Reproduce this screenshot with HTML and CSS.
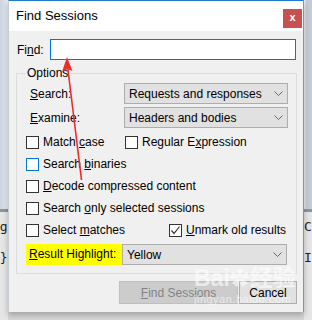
FILE: index.html
```html
<!DOCTYPE html>
<html lang="en">
<head>
    <meta charset="UTF-8">
    <title>Find Sessions</title>
    <link rel="stylesheet" href="styles.css">
</head>
<body>

<div class="screen">
    <!-- window behind, left edge -->
    <div class="side side-left">
        <div class="side-top"></div>
        <div class="side-band"></div>
        <div class="side-text">ag</div>
        <div class="side-text side-text-low">-}</div>
    </div>

    <div class="dialog">
        <div class="titlebar">
            <span class="title">Find Sessions</span>
            <span class="close-btn">x</span>
        </div>

        <div class="dlg-body">
            <!-- Find row -->
            <div class="find-row">
                <span class="find-label">Fi<u>n</u>d:</span>
                <div class="textbox"></div>
            </div>

            <fieldset class="options">
                <legend>Options</legend>

                <div class="field-row">
                    <span class="field-label"><u>S</u>earch:</span>
                    <div class="combo">
                        <span>Requests and responses</span>
                        <svg class="chevron" width="9" height="5" viewBox="0 0 9 5"><path d="M0.5 0.5 L4.5 4.5 L8.5 0.5" fill="none" stroke="#666" stroke-width="1"/></svg>
                    </div>
                </div>
                <div class="field-row">
                    <span class="field-label"><u>E</u>xamine:</span>
                    <div class="combo">
                        <span>Headers and bodies</span>
                        <svg class="chevron" width="9" height="5" viewBox="0 0 9 5"><path d="M0.5 0.5 L4.5 4.5 L8.5 0.5" fill="none" stroke="#666" stroke-width="1"/></svg>
                    </div>
                </div>

                <div class="check-row">
                    <label class="check-item col-short"><span class="check"></span><span class="check-text">Match <u>c</u>ase</span></label>
                    <label class="check-item"><span class="check"></span><span class="check-text">Regular E<u>x</u>pression</span></label>
                </div>
                <div class="check-row">
                    <label class="check-item"><span class="check check-focus"></span><span class="check-text">Search <u>b</u>inaries</span></label>
                </div>
                <div class="check-row">
                    <label class="check-item"><span class="check"></span><span class="check-text"><u>D</u>ecode compressed content</span></label>
                </div>
                <div class="check-row">
                    <label class="check-item"><span class="check"></span><span class="check-text">Search <u>o</u>nly selected sessions</span></label>
                </div>
                <div class="check-row">
                    <label class="check-item col-long"><span class="check"></span><span class="check-text">Select <u>m</u>atches</span></label>
                    <label class="check-item"><span class="check">
                        <svg width="11" height="11" viewBox="0 0 11 11"><path d="M1.5 5.5 L4 8.5 L9.5 1.5" fill="none" stroke="#333" stroke-width="1.2"/></svg>
                    </span><span class="check-text"><u>U</u>nmark old results</span></label>
                </div>

                <div class="highlight-row">
                    <span class="highlight-label"><u>R</u>esult Highlight:</span>
                    <div class="combo">
                        <span>Yellow</span>
                        <svg class="chevron" width="9" height="5" viewBox="0 0 9 5"><path d="M0.5 0.5 L4.5 4.5 L8.5 0.5" fill="none" stroke="#666" stroke-width="1"/></svg>
                    </div>
                </div>
            </fieldset>

            <div class="buttons">
                <div class="btn btn-disabled"><span><u>F</u>ind Sessions</span></div>
                <div class="btn"><span>Cancel</span></div>
            </div>
        </div>
    </div>

    <!-- window behind, right edge -->
    <div class="side side-right">
        <div class="side-top"></div>
        <div class="side-band"></div>
        <div class="side-text">Co</div>
        <div class="side-text side-text-low">I</div>
    </div>

    <!-- annotation arrow drawn over the dialog -->
    <svg class="arrow" width="312" height="320" viewBox="0 0 312 320">
        <path d="M67.5 66 L81.5 180" stroke="#ee2b2b" stroke-width="1.6" fill="none"/>
        <path d="M67 57 L62 72 L67.5 69 L72.5 71 Z" fill="#ee2b2b"/>
    </svg>

    <div class="watermark">
        <div class="wm-big">Bai<span class="wm-paw">&#10047;</span>经验</div>
        <div class="wm-small">jingyan.baidu.com</div>
    </div>
</div>

</body>
</html>
```

FILE: styles.css
```css
body {
    margin: 0;
    font-family: "Liberation Sans", "Noto Sans CJK SC", sans-serif;
    font-size: 12px;
    color: #000;
}

.screen {
    position: relative;
    width: 312px;
    height: 320px;
    display: flex;
    background: #d6d6d6;
    overflow: hidden;
}

/* edges of the window behind */
.side {
    width: 8px;
    height: 320px;
    overflow: hidden;
    background: #e6e6e6;
    display: flex;
    flex-direction: column;
    font-family: "DejaVu Sans Mono", monospace;
    font-size: 13px;
}

.side-left .side-top {
    height: 209px;
    background: linear-gradient(to right, #c9d2de, #e9edf2);
}

.side-right .side-top {
    height: 209px;
    background: linear-gradient(to right, #eeeeee 0, #eeeeee 1px, #c3ccd7 2px, #c3ccd7);
}

.side-band {
    height: 3px;
    background: #8e949b;
}

.side-text {
    margin-top: 6px;
    height: 18px;
    line-height: 18px;
    white-space: nowrap;
    color: #222;
}

.side-left .side-text {
    margin-left: -8px;
}

.side-text-low {
    margin-top: 13px;
}

/* dialog */
.dialog {
    width: 296px;
    height: 312px;
    box-sizing: border-box;
    border: 1px solid #c4cbd3;
    border-top: 1px solid #1f7ad3;
    border-right: 1px solid #5c9ddc;
    border-bottom: none;
    background: #f0f0f0;
    display: flex;
    flex-direction: column;
    box-shadow: 0 3px 6px rgba(0, 0, 0, 0.25);
    z-index: 1;
}

.titlebar {
    height: 30px;
    background: #fff;
    display: flex;
    align-items: center;
    justify-content: space-between;
    padding-left: 7px;
}

.title {
    font-size: 13px;
    margin-top: -1px;
}

.close-btn {
    width: 19px;
    height: 19px;
    margin-right: 1px;
    margin-top: 4px;
    background: #c75050;
    color: #fff;
    font-weight: bold;
    font-size: 11px;
    line-height: 17px;
    text-align: center;
}

.dlg-body {
    padding: 8px 6px 0 8px;
}

.find-row {
    display: flex;
    align-items: center;
    padding-right: 1px;
}

.find-label {
    width: 33px;
}

.textbox {
    flex: 1;
    height: 21px;
    box-sizing: border-box;
    border: 1px solid #0078d7;
    background: #fff;
}

.options {
    margin: 5px 0 0 -1px;
    padding: 2px 8px 8px 9px;
    border: 1px solid #dcdcdc;
    min-width: 0;
}

.options legend {
    padding: 0 1px;
    margin-left: 0;
    line-height: 16px;
}

.field-row {
    display: flex;
    align-items: center;
    height: 21px;
    margin-bottom: 3px;
}

.field-label {
    width: 94px;
    padding-left: 4px;
}

.combo {
    flex: 1;
    height: 21px;
    box-sizing: border-box;
    border: 1px solid #adadad;
    background: #e1e1e1;
    display: flex;
    align-items: center;
    justify-content: space-between;
    padding: 0 4px 0 4px;
}

.chevron {
    display: block;
}

.check-row {
    display: flex;
    align-items: center;
    height: 22px;
}

.field-row + .check-row {
    margin-top: 2px;
}

.check-item {
    display: flex;
    align-items: center;
    white-space: nowrap;
}

.col-short {
    width: 99px;
}

.col-long {
    width: 143px;
}

.check {
    width: 13px;
    height: 13px;
    box-sizing: border-box;
    border: 1px solid #333;
    background: #fff;
    margin-right: 4px;
    display: flex;
    align-items: center;
    justify-content: center;
}

.check-focus {
    border-color: #0078d7;
}

.highlight-row {
    display: flex;
    height: 21px;
    margin-top: 3px;
    margin-right: 1px;
}

.highlight-label {
    width: 96px;
    background: #ffff00;
    line-height: 21px;
    padding-left: 3px;
    box-sizing: border-box;
    white-space: nowrap;
}

.buttons {
    display: flex;
    justify-content: flex-end;
    gap: 1px;
    margin-top: 7px;
}

.btn {
    height: 23px;
    box-sizing: border-box;
    border: 1px solid #adadad;
    background: #e1e1e1;
    display: flex;
    align-items: center;
    justify-content: center;
    width: 58px;
}

.btn-disabled {
    width: 119px;
    border-color: #bfbfbf;
    background: #cccccc;
    color: #838383;
}

/* overlays */
.arrow {
    position: absolute;
    left: 0;
    top: 0;
    z-index: 2;
}

.watermark {
    position: absolute;
    left: 194px;
    top: 264px;
    width: 92px;
    z-index: 3;
    color: rgba(255, 255, 255, 0.6);
    text-align: center;
}

.wm-big {
    font-size: 23px;
    font-weight: bold;
    line-height: 28px;
    white-space: nowrap;
}

.wm-paw {
    font-size: 20px;
}

.wm-small {
    font-size: 11px;
    line-height: 12px;
    letter-spacing: 0.5px;
}
```
